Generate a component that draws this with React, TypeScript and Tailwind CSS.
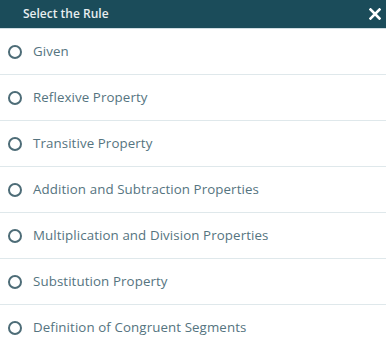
import React from "react";

const items = [
  "Given",
  "Reflexive Property",
  "Transitive Property",
  "Addition and Subtraction Properties",
  "Multiplication and Division Properties",
  "Substitution Property",
  "Definition of Congruent Segments",
];

export default function App() {
  return (
    <div className="w-[386px] h-[350px] bg-white overflow-hidden" style={{ fontFamily: "'Open Sans', sans-serif" }}>
      <div className="h-[29px] bg-[#1b4c5a] flex items-center justify-between pl-[23px] pr-[5px] border-b border-[#cfdde2]">
        <span className="text-[12px] font-semibold text-[#e8eef0]">Select the Rule</span>
        <svg width="12" height="12" viewBox="0 0 12 12" className="mb-[1px]">
          <path d="M1.5 1.5 L10.5 10.5 M10.5 1.5 L1.5 10.5" stroke="white" strokeWidth="2.6" strokeLinecap="square" />
        </svg>
      </div>
      <div className="flex flex-col">
        {items.map((t) => (
          <div key={t} className="h-[46px] flex items-center border-b border-[#dfe8eb] pl-[8px]">
            <span className="w-[14px] h-[14px] rounded-full border-2 border-[#4d6c77] mr-[11px]"></span>
            <span className="text-[13.3px] tracking-[0.1px] text-[#557480]">{t}</span>
          </div>
        ))}
      </div>
    </div>
  );
}
